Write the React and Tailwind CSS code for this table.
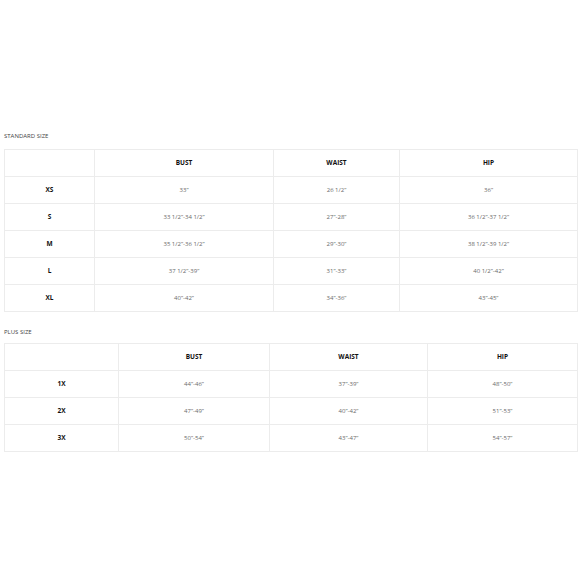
import React from "react";

const standard = [
  ["XS", "33\u201d", "26 1/2\u201d", "36\u201d"],
  ["S", "33 1/2\u201d-34 1/2\u201d", "27\u201d-28\u201d", "36 1/2\u201d-37 1/2\u201d"],
  ["M", "35 1/2\u201d-36 1/2\u201d", "29\u201d-30\u201d", "38 1/2\u201d-39 1/2\u201d"],
  ["L", "37 1/2\u201d-39\u201d", "31\u201d-33\u201d", "40 1/2\u201d-42\u201d"],
  ["XL", "40\u201d-42\u201d", "34\u201d-36\u201d", "43\u201d-45\u201d"],
];
const plus = [
  ["1X", "44\u201d-46\u201d", "37\u201d-39\u201d", "48\u201d-50\u201d"],
  ["2X", "47\u201d-49\u201d", "40\u201d-42\u201d", "51\u201d-53\u201d"],
  ["3X", "50\u201d-54\u201d", "43\u201d-47\u201d", "54\u201d-57\u201d"],
];

function SizeTable({ rows, widths }) {
  return (
    <table className="table-fixed border-collapse w-[573px]">
      <colgroup>
        {widths.map((w, i) => (
          <col key={i} style={{ width: w }} />
        ))}
      </colgroup>
      <thead>
        <tr className="h-[27px]">
          <th className="border border-[#ececec]"></th>
          <th className="border border-[#ececec] text-[6.5px] font-bold text-[#111]">BUST</th>
          <th className="border border-[#ececec] text-[6.5px] font-bold text-[#111]">WAIST</th>
          <th className="border border-[#ececec] text-[6.5px] font-bold text-[#111]">HIP</th>
        </tr>
      </thead>
      <tbody>
        {rows.map((r) => (
          <tr key={r[0]} className="h-[27px]">
            <td className="border border-[#ececec] text-center text-[6.5px] font-bold text-[#111]">{r[0]}</td>
            {r.slice(1).map((v, i) => (
              <td key={i} className="border border-[#ececec] text-center text-[6px] text-[#6a6a6a]">{v}</td>
            ))}
          </tr>
        ))}
      </tbody>
    </table>
  );
}

export default function App() {
  return (
    <div className="w-[580px] h-[580px] bg-white pl-[4px] pt-[132px] font-['Open_Sans',sans-serif]">
      <div className="text-[6px] text-[#444] leading-[8px] mb-[9px]">STANDARD SIZE</div>
      <SizeTable rows={standard} widths={[90, 179, 126, 178]} />
      <div className="text-[6px] text-[#444] leading-[8px] mt-[16px] mb-[7px]">PLUS SIZE</div>
      <SizeTable rows={plus} widths={[114, 151, 158, 150]} />
    </div>
  );
}
